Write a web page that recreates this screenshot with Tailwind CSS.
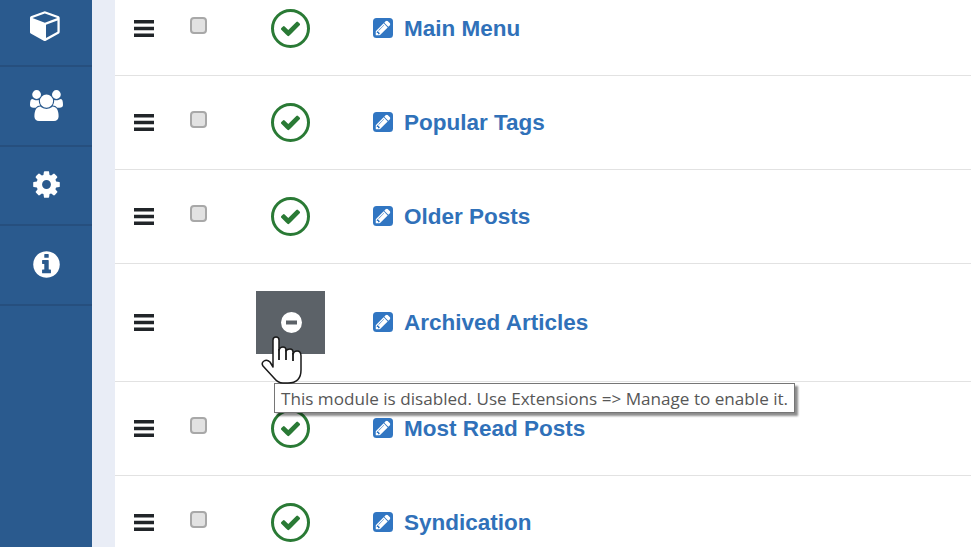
<!DOCTYPE html>
<html lang="en">
<head>
<meta charset="utf-8">
<title>Modules</title>
<script src="https://cdn.jsdelivr.net/npm/@tailwindcss/browser@4"></script>
</head>
<body class="h-[547px] w-[971px] overflow-hidden bg-white font-['Liberation_Sans',Arial,sans-serif]">
<div class="relative flex h-[547px] w-[971px] overflow-hidden">
  <!-- Sidebar -->
  <aside class="w-[92px] shrink-0 bg-[#2a5a8e] -mt-[14px] h-[561px] text-white">
    <div class="flex h-[81px] items-center justify-center border-b-2 border-[#264f7e]">
      <svg class="h-[32px] w-[32px] -translate-y-px" viewBox="0 0 1792 1792" fill="currentColor"><path d="M896 1629l640-349v-636l-640 233v752zm-64-865l698-254-698-254-698 254zm832-252v768q0 35-18 65t-50 47l-704 384q-28 16-61 16t-61-16l-704-384q-32-17-50-47t-18-65v-768q0-40 23-73t61-49l704-256q22-8 44-8t44 8l704 256q38 16 61 49t23 73z"/></svg>
    </div>
    <div class="flex h-[80px] items-center justify-center border-b-2 border-[#264f7e]">
      <svg class="h-[33px] w-[33px] -translate-y-px" viewBox="0 0 1920 1792" fill="currentColor"><path d="M593 896q-162 5-265 128h-134q-82 0-138-40.500t-56-118.500q0-353 124-353 6 0 43.500 21t97.500 42.500 119 21.500q67 0 133-23-5 37-5 66 0 139 81 256zm1071 637q0 120-73 189.500t-194 69.500h-874q-121 0-194-69.500t-73-189.500q0-53 3.500-103.500t14-109 26.500-108.500 43-97.500 62-81 85.500-53.500 111.500-20q10 0 43 21.500t73 48 107 48 135 21.500 135-21.500 107-48 73-48 43-21.500q61 0 111.500 20t85.500 53.500 62 81 43 97.500 26.500 108.500 14 109 3.500 103.500zm-1024-1277q0 106-75 181t-181 75-181-75-75-181 75-181 181-75 181 75 75 181zm704 384q0 159-112.500 271.500t-271.500 112.500-271.500-112.500-112.500-271.500 112.500-271.500 271.500-112.500 271.500 112.500 112.500 271.500zm576 225q0 78-56 118.500t-138 40.500h-134q-103-123-265-128 81-117 81-256 0-29-5-66 66 23 133 23 59 0 119-21.500t97.500-42.500 43.500-21q124 0 124 353zm-128-609q0 106-75 181t-181 75-181-75-75-181 75-181 181-75 181 75 75 181z"/></svg>
    </div>
    <div class="flex h-[79px] items-center justify-center border-b-2 border-[#264f7e]">
      <svg class="h-[31px] w-[31px] -translate-y-px" viewBox="0 0 1792 1792" fill="currentColor"><path d="M1152 896q0-106-75-181t-181-75-181 75-75 181 75 181 181 75 181-75 75-181zm512-109v222q0 12-8 23t-20 13l-185 28q-19 54-39 91 35 50 107 138 10 12 10 25t-9 23q-27 37-99 108t-94 71q-12 0-26-9l-138-108q-44 23-91 38-16 136-29 186-7 28-36 28h-222q-14 0-24.500-8.500t-11.500-21.500l-28-184q-49-16-90-37l-141 107q-10 9-25 9-14 0-25-11-126-114-165-168-7-10-7-23 0-12 8-23 15-21 51-66.500t54-70.500q-27-50-41-99l-183-27q-13-2-21-12.500t-8-23.500v-222q0-12 8-23t19-13l186-28q14-46 39-92-40-57-107-138-10-12-10-24 0-10 9-23 26-36 98.500-107.500t94.500-71.500q13 0 26 10l138 107q44-23 91-38 16-136 29-186 7-28 36-28h222q14 0 24.500 8.500t11.500 21.500l28 184q49 16 90 37l142-107q9-9 24-9 13 0 25 10 129 119 165 170 7 8 7 22 0 12-8 23-15 21-51 66.500t-54 70.500q26 50 41 98l183 28q13 2 21 12.500t8 23.500z"/></svg>
    </div>
    <div class="flex h-[80px] items-center justify-center border-b-2 border-[#264f7e]">
      <svg class="h-[31px] w-[31px] -translate-y-px" viewBox="0 0 1792 1792" fill="currentColor"><path d="M1152 1376v-160q0-14-9-23t-23-9h-96v-512q0-14-9-23t-23-9h-320q-14 0-23 9t-9 23v160q0 14 9 23t23 9h96v320h-96q-14 0-23 9t-9 23v160q0 14 9 23t23 9h448q14 0 23-9t9-23zm-128-896v-160q0-14-9-23t-23-9h-192q-14 0-23 9t-9 23v160q0 14 9 23t23 9h192q14 0 23-9t9-23zm640 416q0 209-103 385.500t-279.500 279.500-385.500 103-385.500-103-279.500-279.500-103-385.500 103-385.500 279.500-279.500 385.500-103 385.500 103 279.500 279.500 103 385.500z"/></svg>
    </div>
  </aside>
  <!-- Gutter -->
  <div class="w-[23px] shrink-0 bg-[#e9edf6]"></div>
  <!-- Module list -->
  <main class="flex-1 -mt-[18px] text-[#3071b9]">
    <div class="flex h-[94px] items-center border-b border-[#e2e2e2] pl-[19px]">
      <svg class="h-[17px] w-[20px] shrink-0" viewBox="0 0 20 17" fill="#212529"><rect width="20" height="3.500"/><rect y="6.750" width="20" height="3.500"/><rect y="13.500" width="20" height="3.500"/></svg>
      <span class="ml-[36px] -mt-[6px] h-[17px] w-[17px] shrink-0 rounded-[4px] border-2 border-[#a8a8a8] bg-[#e2e2e2]"></span>
      <div class="ml-[49px] flex w-[69px] shrink-0 justify-center">
        <svg class="h-[39px] w-[39px]" viewBox="0 0 39 39"><circle cx="19.500" cy="19.500" r="18" fill="none" stroke="#2a7a35" stroke-width="3"/><svg x="8.500" y="8.500" width="22" height="22" viewBox="0 0 1792 1792"><path d="M1671 566q0 40-28 68l-724 724-136 136q-28 28-68 28t-68-28l-136-136-362-362q-28-28-28-68t28-68l136-136q28-28 68-28t68 28l294 295 656-657q28-28 68-28t68 28l136 136q28 28 28 68z" fill="#2a7a35"/></svg></svg>
      </div>
      <svg class="ml-[48px] -mt-px h-[20px] w-[20px] shrink-0" viewBox="0 0 20 20"><rect width="20" height="20" rx="3.500" fill="#3176c2"/><svg x="2.500" y="2.500" width="15" height="15" viewBox="128 128 1536 1536"><path d="M491 1536l91-91-235-235-91 91v107h128v128h107zm523-928q0-22-22-22-10 0-17 7l-542 542q-7 7-7 17 0 22 22 22 10 0 17-7l542-542q7-7 7-17zm-54-192l416 416-832 832h-416v-416zm683 96q0 53-37 90l-166 166-416-416 166-165q36-38 90-38 53 0 91 38l235 234q37 39 37 91z" fill="#fff"/></svg></svg>
      <span class="ml-[11px] text-[22.5px] font-bold">Main Menu</span>
    </div>
    <div class="flex h-[94px] items-center border-b border-[#e2e2e2] pl-[19px]">
      <svg class="h-[17px] w-[20px] shrink-0" viewBox="0 0 20 17" fill="#212529"><rect width="20" height="3.500"/><rect y="6.750" width="20" height="3.500"/><rect y="13.500" width="20" height="3.500"/></svg>
      <span class="ml-[36px] -mt-[6px] h-[17px] w-[17px] shrink-0 rounded-[4px] border-2 border-[#a8a8a8] bg-[#e2e2e2]"></span>
      <div class="ml-[49px] flex w-[69px] shrink-0 justify-center">
        <svg class="h-[39px] w-[39px]" viewBox="0 0 39 39"><circle cx="19.500" cy="19.500" r="18" fill="none" stroke="#2a7a35" stroke-width="3"/><svg x="8.500" y="8.500" width="22" height="22" viewBox="0 0 1792 1792"><path d="M1671 566q0 40-28 68l-724 724-136 136q-28 28-68 28t-68-28l-136-136-362-362q-28-28-28-68t28-68l136-136q28-28 68-28t68 28l294 295 656-657q28-28 68-28t68 28l136 136q28 28 28 68z" fill="#2a7a35"/></svg></svg>
      </div>
      <svg class="ml-[48px] -mt-px h-[20px] w-[20px] shrink-0" viewBox="0 0 20 20"><rect width="20" height="20" rx="3.500" fill="#3176c2"/><svg x="2.500" y="2.500" width="15" height="15" viewBox="128 128 1536 1536"><path d="M491 1536l91-91-235-235-91 91v107h128v128h107zm523-928q0-22-22-22-10 0-17 7l-542 542q-7 7-7 17 0 22 22 22 10 0 17-7l542-542q7-7 7-17zm-54-192l416 416-832 832h-416v-416zm683 96q0 53-37 90l-166 166-416-416 166-165q36-38 90-38 53 0 91 38l235 234q37 39 37 91z" fill="#fff"/></svg></svg>
      <span class="ml-[11px] text-[22.5px] font-bold">Popular Tags</span>
    </div>
    <div class="flex h-[94px] items-center border-b border-[#e2e2e2] pl-[19px]">
      <svg class="h-[17px] w-[20px] shrink-0" viewBox="0 0 20 17" fill="#212529"><rect width="20" height="3.500"/><rect y="6.750" width="20" height="3.500"/><rect y="13.500" width="20" height="3.500"/></svg>
      <span class="ml-[36px] -mt-[6px] h-[17px] w-[17px] shrink-0 rounded-[4px] border-2 border-[#a8a8a8] bg-[#e2e2e2]"></span>
      <div class="ml-[49px] flex w-[69px] shrink-0 justify-center">
        <svg class="h-[39px] w-[39px]" viewBox="0 0 39 39"><circle cx="19.500" cy="19.500" r="18" fill="none" stroke="#2a7a35" stroke-width="3"/><svg x="8.500" y="8.500" width="22" height="22" viewBox="0 0 1792 1792"><path d="M1671 566q0 40-28 68l-724 724-136 136q-28 28-68 28t-68-28l-136-136-362-362q-28-28-28-68t28-68l136-136q28-28 68-28t68 28l294 295 656-657q28-28 68-28t68 28l136 136q28 28 28 68z" fill="#2a7a35"/></svg></svg>
      </div>
      <svg class="ml-[48px] -mt-px h-[20px] w-[20px] shrink-0" viewBox="0 0 20 20"><rect width="20" height="20" rx="3.500" fill="#3176c2"/><svg x="2.500" y="2.500" width="15" height="15" viewBox="128 128 1536 1536"><path d="M491 1536l91-91-235-235-91 91v107h128v128h107zm523-928q0-22-22-22-10 0-17 7l-542 542q-7 7-7 17 0 22 22 22 10 0 17-7l542-542q7-7 7-17zm-54-192l416 416-832 832h-416v-416zm683 96q0 53-37 90l-166 166-416-416 166-165q36-38 90-38 53 0 91 38l235 234q37 39 37 91z" fill="#fff"/></svg></svg>
      <span class="ml-[11px] text-[22.5px] font-bold">Older Posts</span>
    </div>
    <div class="flex h-[118px] items-center border-b border-[#e2e2e2] pl-[19px]">
      <svg class="h-[17px] w-[20px] shrink-0" viewBox="0 0 20 17" fill="#212529"><rect width="20" height="3.500"/><rect y="6.750" width="20" height="3.500"/><rect y="13.500" width="20" height="3.500"/></svg>
      <span class="ml-[36px] h-[17px] w-[17px] shrink-0"></span>
      <div class="ml-[49px] flex h-[63px] w-[69px] shrink-0 items-center justify-center bg-[#5c6268]">
        <svg class="ml-px h-[21px] w-[21px]" viewBox="0 0 21 21"><circle cx="10.500" cy="10.500" r="10.500" fill="#fff"/><rect x="5" y="8.500" width="11" height="4" fill="#5c6268"/></svg>
      </div>
      <svg class="ml-[48px] -mt-px h-[20px] w-[20px] shrink-0" viewBox="0 0 20 20"><rect width="20" height="20" rx="3.500" fill="#3176c2"/><svg x="2.500" y="2.500" width="15" height="15" viewBox="128 128 1536 1536"><path d="M491 1536l91-91-235-235-91 91v107h128v128h107zm523-928q0-22-22-22-10 0-17 7l-542 542q-7 7-7 17 0 22 22 22 10 0 17-7l542-542q7-7 7-17zm-54-192l416 416-832 832h-416v-416zm683 96q0 53-37 90l-166 166-416-416 166-165q36-38 90-38 53 0 91 38l235 234q37 39 37 91z" fill="#fff"/></svg></svg>
      <span class="ml-[11px] text-[22.5px] font-bold">Archived Articles</span>
    </div>
    <div class="flex h-[94px] items-center border-b border-[#e2e2e2] pl-[19px]">
      <svg class="h-[17px] w-[20px] shrink-0" viewBox="0 0 20 17" fill="#212529"><rect width="20" height="3.500"/><rect y="6.750" width="20" height="3.500"/><rect y="13.500" width="20" height="3.500"/></svg>
      <span class="ml-[36px] -mt-[6px] h-[17px] w-[17px] shrink-0 rounded-[4px] border-2 border-[#a8a8a8] bg-[#e2e2e2]"></span>
      <div class="ml-[49px] flex w-[69px] shrink-0 justify-center">
        <svg class="h-[39px] w-[39px]" viewBox="0 0 39 39"><circle cx="19.500" cy="19.500" r="18" fill="none" stroke="#2a7a35" stroke-width="3"/><svg x="8.500" y="8.500" width="22" height="22" viewBox="0 0 1792 1792"><path d="M1671 566q0 40-28 68l-724 724-136 136q-28 28-68 28t-68-28l-136-136-362-362q-28-28-28-68t28-68l136-136q28-28 68-28t68 28l294 295 656-657q28-28 68-28t68 28l136 136q28 28 28 68z" fill="#2a7a35"/></svg></svg>
      </div>
      <svg class="ml-[48px] -mt-px h-[20px] w-[20px] shrink-0" viewBox="0 0 20 20"><rect width="20" height="20" rx="3.500" fill="#3176c2"/><svg x="2.500" y="2.500" width="15" height="15" viewBox="128 128 1536 1536"><path d="M491 1536l91-91-235-235-91 91v107h128v128h107zm523-928q0-22-22-22-10 0-17 7l-542 542q-7 7-7 17 0 22 22 22 10 0 17-7l542-542q7-7 7-17zm-54-192l416 416-832 832h-416v-416zm683 96q0 53-37 90l-166 166-416-416 166-165q36-38 90-38 53 0 91 38l235 234q37 39 37 91z" fill="#fff"/></svg></svg>
      <span class="ml-[11px] text-[22.5px] font-bold">Most Read Posts</span>
    </div>
    <div class="flex h-[94px] items-center border-b border-[#e2e2e2] pl-[19px]">
      <svg class="h-[17px] w-[20px] shrink-0" viewBox="0 0 20 17" fill="#212529"><rect width="20" height="3.500"/><rect y="6.750" width="20" height="3.500"/><rect y="13.500" width="20" height="3.500"/></svg>
      <span class="ml-[36px] -mt-[6px] h-[17px] w-[17px] shrink-0 rounded-[4px] border-2 border-[#a8a8a8] bg-[#e2e2e2]"></span>
      <div class="ml-[49px] flex w-[69px] shrink-0 justify-center">
        <svg class="h-[39px] w-[39px]" viewBox="0 0 39 39"><circle cx="19.500" cy="19.500" r="18" fill="none" stroke="#2a7a35" stroke-width="3"/><svg x="8.500" y="8.500" width="22" height="22" viewBox="0 0 1792 1792"><path d="M1671 566q0 40-28 68l-724 724-136 136q-28 28-68 28t-68-28l-136-136-362-362q-28-28-28-68t28-68l136-136q28-28 68-28t68 28l294 295 656-657q28-28 68-28t68 28l136 136q28 28 28 68z" fill="#2a7a35"/></svg></svg>
      </div>
      <svg class="ml-[48px] -mt-px h-[20px] w-[20px] shrink-0" viewBox="0 0 20 20"><rect width="20" height="20" rx="3.500" fill="#3176c2"/><svg x="2.500" y="2.500" width="15" height="15" viewBox="128 128 1536 1536"><path d="M491 1536l91-91-235-235-91 91v107h128v128h107zm523-928q0-22-22-22-10 0-17 7l-542 542q-7 7-7 17 0 22 22 22 10 0 17-7l542-542q7-7 7-17zm-54-192l416 416-832 832h-416v-416zm683 96q0 53-37 90l-166 166-416-416 166-165q36-38 90-38 53 0 91 38l235 234q37 39 37 91z" fill="#fff"/></svg></svg>
      <span class="ml-[11px] text-[22.5px] font-bold">Syndication</span>
    </div>
  </main>
  <!-- Tooltip -->
  <div class="absolute left-[274px] top-[383px] z-10 flex h-[30px] w-[521px] items-center whitespace-nowrap border border-[#767676] bg-white pl-[6px] pt-px font-['Open_Sans',sans-serif] text-[17.13px] text-[#575757] shadow-[3px_3px_2px_rgba(0,0,0,0.45)]">This module is disabled. Use Extensions =&gt; Manage to enable it.</div>
  <!-- Cursor -->
  <svg class="absolute left-[260px] top-[336px] z-20 h-[48px] w-[42px]" viewBox="0 0 42 48">
    <path d="M13 31V4Q13 1 16 1Q19 1 19 4V14Q20 11 23 11Q26 11 26 14V15Q27 13 30 13Q33 13 33 16V18Q34 15 37 15Q41 15 41 20V34Q41 47 28 47H23Q18 47 14 42L3 30Q1 27 4 25Q7 23 10 26Z" fill="#fff" stroke="#1a1a1a" stroke-width="1.500" stroke-linejoin="round"/>
    <path d="M19 13v11M26 14v10M33 17v8" fill="none" stroke="#1a1a1a" stroke-width="1.800"/>
  </svg>
</div>
</body>
</html>
